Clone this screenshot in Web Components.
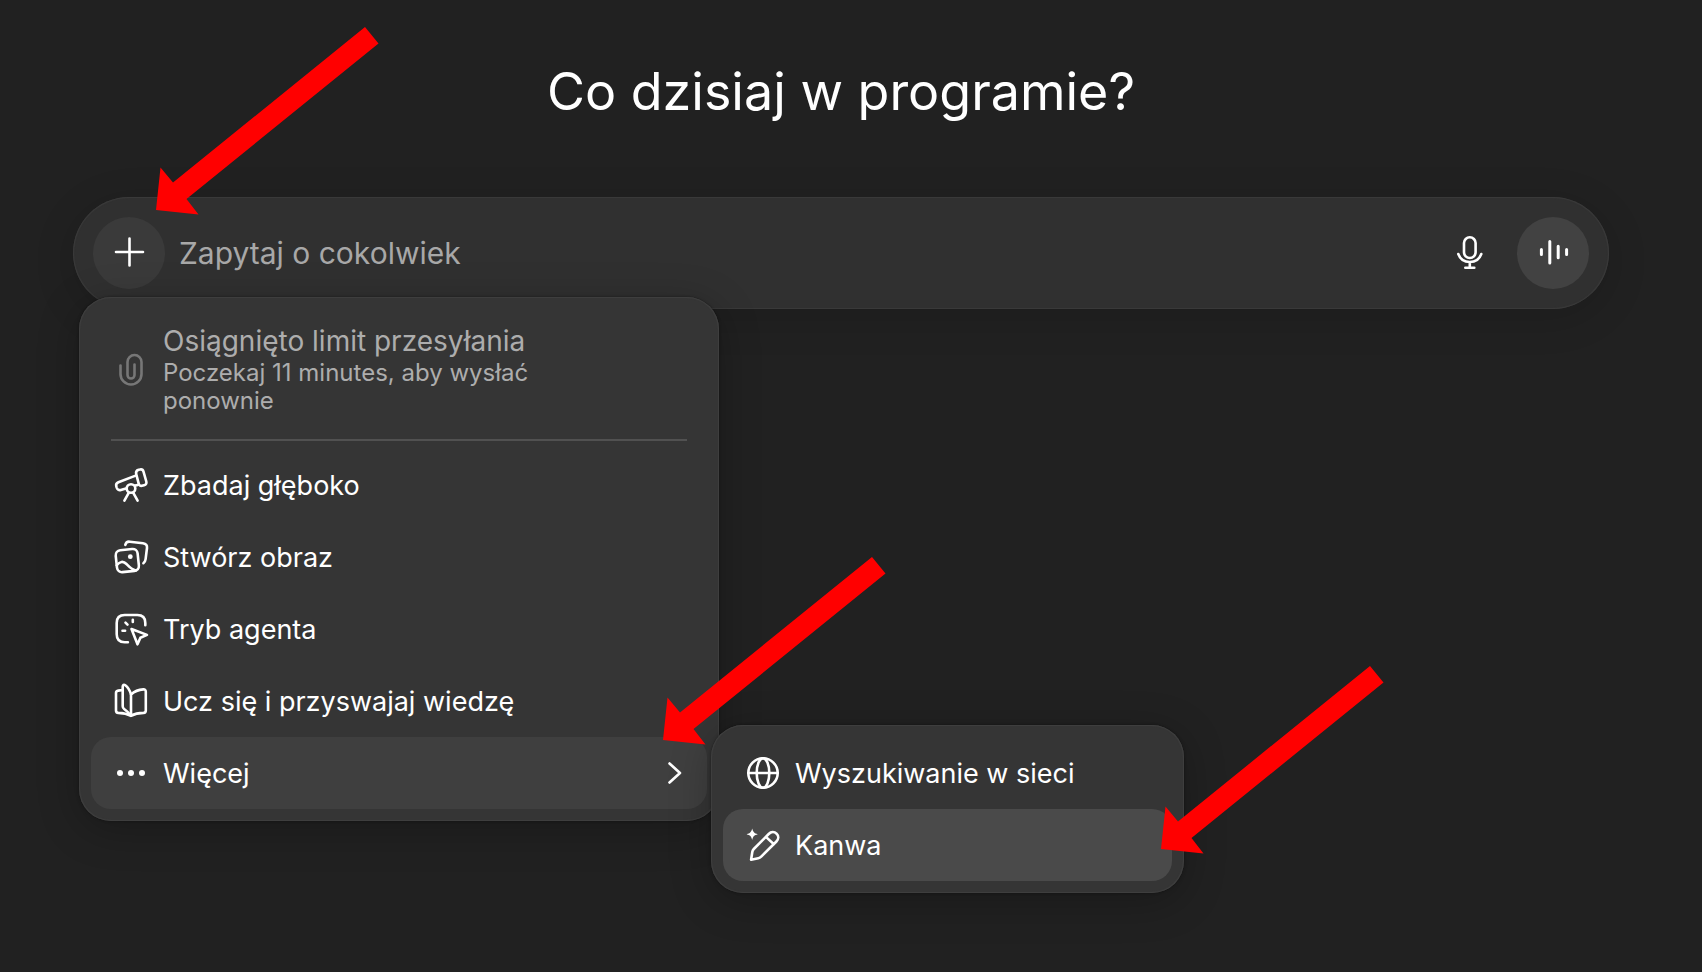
<!DOCTYPE html>
<html lang="pl">
<head>
<meta charset="utf-8">
<meta name="viewport" content="width=device-width, initial-scale=1">
<title>Co dzisiaj w programie?</title>
<style>
html, body {
	margin: 0;
	min-height: 100%;
	background: #212121;
}
body {
	color: #fff;
	font-family: Inter, "Liberation Sans", sans-serif;
	font-size: 27px;
}
</style>
</head>
<body>
<chat-start>
	<span slot="title">Co dzisiaj w programie?</span>
	<chat-composer placeholder="Zapytaj o cokolwiek">
		<chat-menu slot="menu" label="Narzędzia">
			<menu-notice icon="clip">
				Osiągnięto limit przesyłania
				<span slot="detail">Poczekaj 11 minutes, aby wysłać ponownie</span>
			</menu-notice>
			<menu-item icon="telescope">Zbadaj głęboko</menu-item>
			<menu-item icon="images">Stwórz obraz</menu-item>
			<menu-item icon="agent">Tryb agenta</menu-item>
			<menu-item icon="book">Ucz się i przyswajaj wiedzę</menu-item>
			<menu-item icon="dots" state="open">Więcej</menu-item>
			<chat-menu slot="submenu" class="sub" label="Więcej">
				<menu-item icon="globe">Wyszukiwanie w sieci</menu-item>
				<menu-item icon="canvas" state="active">Kanwa</menu-item>
				<callout-arrow slot="callout"></callout-arrow>
			</chat-menu>
			<callout-arrow slot="callout"></callout-arrow>
		</chat-menu>
		<callout-arrow slot="callout"></callout-arrow>
	</chat-composer>
</chat-start>

<script>
(function() {

// all icons are drawn on a 40 x 40 grid
const icons = {
	plus: '<path d="M20.5 5.5v27M7 19h27"/>',
	mic: '<rect x="15" y="4.3" width="11.6" height="20.7" rx="5.8"/><path d="M9.3 21c1.8 5 6 8 11.5 8s9.7-3 11.5-8M20.8 29v5.7M16.3 34.7h9"/>',
	voice: '<path stroke-width="3" d="M8.4 16.5v5M16.8 8.500v21.400M25.2 13.3v11.4M33.6 16.5v5"/>',
	clip: '<path d="M9.5 15.5V24a10.5 10.5 0 0 0 21 0V12a7 7 0 0 0-14 0v13a3.5 3.5 0 0 0 7 0V14.5"/>',
	telescope: '<path d="M24 10.9 7.4 17.2C5.5 18 4.800 19.5 5.3 21.3l.3 1.2c.6 2 2.2 3 4.2 2.4l6-1.7M24.2 20.6l2.5-.7"/>' +
		'<path d="m25.2 9.2 2.5 9.4c.4 1.7 1.6 2.6 3.2 2.2l2.2-.6c1.900-.5 2.7-1.9 2.2-3.7L32.5 6.6c-.5-1.8-1.9-2.6-3.7-2.1l-1.2.3c-2 .6-2.9 2.2-2.4 4.4Z"/>' +
		'<circle cx="20" cy="23.5" r="4.3"/><path d="m17.7 27.8-4.3 7.9M22.3 27.8l4.3 7.9"/>',
	images: '<g transform="rotate(-6 16.3 23.6)"><rect x="5.3" y="12.6" width="22" height="22" rx="5"/></g>' +
		'<path d="M5.7 28.3c3.2-4 6.5-4.6 9.8-1.3 3 3.1 5.2 5.5 9.3 6.4"/><circle cx="19.3" cy="19.7" r="2.4" fill="currentColor" stroke="none"/>' +
		'<path d="M14.3 7.9c.6-2.4 2-3.5 4.5-3.2L32 6.2c2.9.4 4.3 2 4 4.8l-1.4 11.2c-.2 1.9-.8 3-2.2 4"/>',
	agent: '<path d="M34.3 16.3V14c0-5.5-2.5-8-8-8H13.7c-5.5 0-8 2.5-8 8v11.3c0 5.5 2.5 8 8 8h3.2"/>' +
		'<path d="M21.8 10.7v2.2M14.5 13.7l2 2M11.5 21.7h2.6"/><path d="m20.5 20 15.500 5.9-6.6 2.9-2.9 6.5Z"/>',
	book: '<path d="M11.7 9 7.3 9.6C5.8 9.8 5 10.7 5 12v17.5c0 1.7.8 2.3 2.3 2.4 5.2.2 9 1 12.7 2.9 3.7-2 7.5-2.8 12.5-2.9 1.5-.1 2.3-.8 2.3-2.4V10.7c0-1.6-.9-2.4-2.5-2.3-4.9.3-8.8 1.9-12.3 5.1v21.1"/>' +
		'<path d="M20 13.5c-1.2-4.3-3-7.2-5.7-9.2-1.4-1-2.6-.3-2.6 1.5v19.5c0 1.3.4 2 1.4 2.700 2.8 1.9 4.9 4 6.9 6.8"/>',
	dots: '<g fill="currentColor" stroke="none"><circle cx="9" cy="20" r="3"/><circle cx="20" cy="20" r="3"/><circle cx="31" cy="20" r="3"/></g>',
	globe: '<circle cx="20" cy="20" r="14.7"/><ellipse cx="20" cy="20" rx="6.3" ry="14.7"/><path d="M5.3 20h29.4"/>',
	canvas: '<path fill="currentColor" stroke="none" d="M9.2 3.500c.9 3.6 2 4.7 5.6 5.7-3.6 1-4.7 2.1-5.6 5.7-.9-3.6-2-4.7-5.6-5.7 3.6-1 4.7-2.1 5.6-5.7Z"/>' +
		'<path d="M8.1 34.7 9.3 27c.2-1.3.6-2.1 1.5-3L25.7 9c2.4-2.4 5.6-2.5 7.9-.3 2.3 2.3 2.2 5.4-.2 7.8L18.2 31.7c-.9.9-1.6 1.3-2.9 1.5ZM22.9 11.9l8 7.3"/>',
	chevron: '<path d="M14.5 10.5 25 20 14.5 29.5"/>'
};

function define(name, html, setup) {
	const template = document.createElement('template');
	template.innerHTML = html;
	window.customElements.define(name, class extends HTMLElement {
		constructor() {
			super();
			this.attachShadow({mode: 'open'}).appendChild(template.content.cloneNode(true));
		}
		connectedCallback() {
			if (setup) setup(this, this.shadowRoot);
		}
	});
}

const iconTemplate = document.createElement('template');
iconTemplate.innerHTML = `
<style>
:host { display: block; flex: none; width: 40px; height: 40px; }
svg { display: block; width: 100%; height: 100%; fill: none; stroke: currentColor; stroke-width: 2.6; stroke-linecap: round; stroke-linejoin: round; }
</style>
<svg viewBox="0 0 40 40" aria-hidden="true"></svg>`;

class LineIcon extends HTMLElement {
	static get observedAttributes() { return ['name']; }
	constructor() {
		super();
		this.attachShadow({mode: 'open'}).appendChild(iconTemplate.content.cloneNode(true));
	}
	attributeChangedCallback(name, oldValue, newValue) {
		this.shadowRoot.querySelector('svg').innerHTML = icons[newValue] || '';
	}
}
window.customElements.define('line-icon', LineIcon);

define('callout-arrow', `
<style>
:host { display: block; width: 223px; height: 188px; pointer-events: none; }
svg { display: block; width: 100%; height: 100%; fill: #f00; }
</style>
<svg viewBox="0 0 223 188" aria-hidden="true"><path d="M0 183 4.5 140.5 17 155.5 209 0 222.5 16.5 30.5 172 42.5 187.5Z"/></svg>`);

define('menu-item', `
<style>
:host { display: block; }
button {
	display: flex;
	align-items: center;
	gap: 12px;
	box-sizing: border-box;
	width: 100%;
	min-height: 72px;
	padding: 0 20px;
	border: 0;
	border-radius: 20px;
	background: none;
	color: inherit;
	font: inherit;
	text-align: left;
}
.label { flex: 1; }
.more { display: none; margin-right: -8px; }
button:hover { background: #3f3f3f; }
:host([state="open"]) button { background: #3f3f3f; }
:host([state="open"]) .more { display: block; }
:host([state="active"]) button { background: #4a4a4a; }
</style>
<button type="button" role="menuitem">
	<line-icon class="icon"></line-icon>
	<span class="label"><slot></slot></span>
	<line-icon class="more" name="chevron"></line-icon>
</button>`, function(elem, root) {
	root.querySelector('.icon').setAttribute('name', elem.getAttribute('icon'));
	if (elem.getAttribute('state') === 'open') {
		root.querySelector('button').setAttribute('aria-expanded', 'true');
	}
});

define('menu-notice', `
<style>
:host { display: block; color: #adadad; }
.notice { display: flex; align-items: center; gap: 12px; padding: 16px 20px; }
line-icon { color: #777; }
.title { font-size: 28px; line-height: 32px; }
.detail { max-width: 400px; margin-top: 2px; font-size: 24px; line-height: 28px; }
hr { height: 2px; margin: 8px 20px; border: 0; background: #515151; }
</style>
<div class="notice">
	<line-icon></line-icon>
	<div>
		<div class="title"><slot></slot></div>
		<div class="detail"><slot name="detail"></slot></div>
	</div>
</div>
<hr>`, function(elem, root) {
	root.querySelector('line-icon').setAttribute('name', elem.getAttribute('icon'));
});

define('chat-menu', `
<style>
:host {
	display: block;
	position: absolute;
	box-sizing: border-box;
	width: 640px;
	padding: 12px;
	border-radius: 32px;
	background: #353535;
	box-shadow: inset 0 0 1px 1px #404040, 0 0 3px rgb(0 0 0 / 40%), 0 8px 40px rgb(0 0 0 / 25%);
}
:host(.sub) { width: 473px; }
/* the submenu opens beside the last row */
::slotted(chat-menu) { left: calc(100% - 8px); bottom: -72px; }
::slotted(callout-arrow) { position: absolute; z-index: 2; top: 260px; right: -167px; }
:host(.sub) ::slotted(callout-arrow) { top: -59px; right: -200px; }
</style>
<div role="menu"><slot></slot></div>
<slot name="submenu"></slot>
<slot name="callout"></slot>`, function(elem, root) {
	root.querySelector('div').setAttribute('aria-label', elem.getAttribute('label'));
});

define('chat-composer', `
<style>
:host { display: block; position: relative; }
.bar {
	display: flex;
	align-items: center;
	padding: 20px;
	border-radius: 56px;
	background: #303030;
	box-shadow: inset 0 0 1px 1px #3b3b3b, 0 8px 40px rgb(0 0 0 / 15%);
}
button {
	display: flex;
	align-items: center;
	justify-content: center;
	flex: none;
	width: 72px;
	height: 72px;
	padding: 0;
	border: 0;
	border-radius: 50%;
	background: none;
	color: #fff;
}
.add { background: #3a3a3a; }
.voice { margin-left: 12px; background: #424242; }
input {
	flex: 1;
	min-width: 0;
	margin: 0 16px 0 14px;
	padding: 0;
	border: 0;
	outline: 0;
	background: none;
	color: #fff;
	font: inherit;
	font-size: 30px;
	line-height: 40px;
}
input::placeholder { color: #a8a8a8; opacity: 1; }
::slotted(chat-menu) { left: 6px; top: 100px; }
::slotted(callout-arrow) { position: absolute; left: 83px; top: -170px; }
</style>
<div class="bar">
	<button class="add" type="button" aria-label="Dodaj"><line-icon name="plus"></line-icon></button>
	<input type="text">
	<button type="button" aria-label="Dyktuj"><line-icon name="mic"></line-icon></button>
	<button class="voice" type="button" aria-label="Tryb głosowy"><line-icon name="voice"></line-icon></button>
</div>
<slot name="menu"></slot>
<slot name="callout"></slot>`, function(elem, root) {
	const input = root.querySelector('input');
	input.placeholder = elem.getAttribute('placeholder');
	input.setAttribute('aria-label', input.placeholder);
});

define('chat-start', `
<style>
:host {
	display: flex;
	flex-direction: column;
	align-items: center;
	gap: 69px;
	box-sizing: border-box;
	min-height: 100vh;
	padding: 56px 20px 0 0;
}
h1 { margin: 0; font-size: 52px; font-weight: 400; line-height: 72px; }
::slotted(chat-composer) { width: min(1536px, 100% - 48px); }
</style>
<h1><slot name="title"></slot></h1>
<slot></slot>`);

})();
</script>
</body>
</html>
